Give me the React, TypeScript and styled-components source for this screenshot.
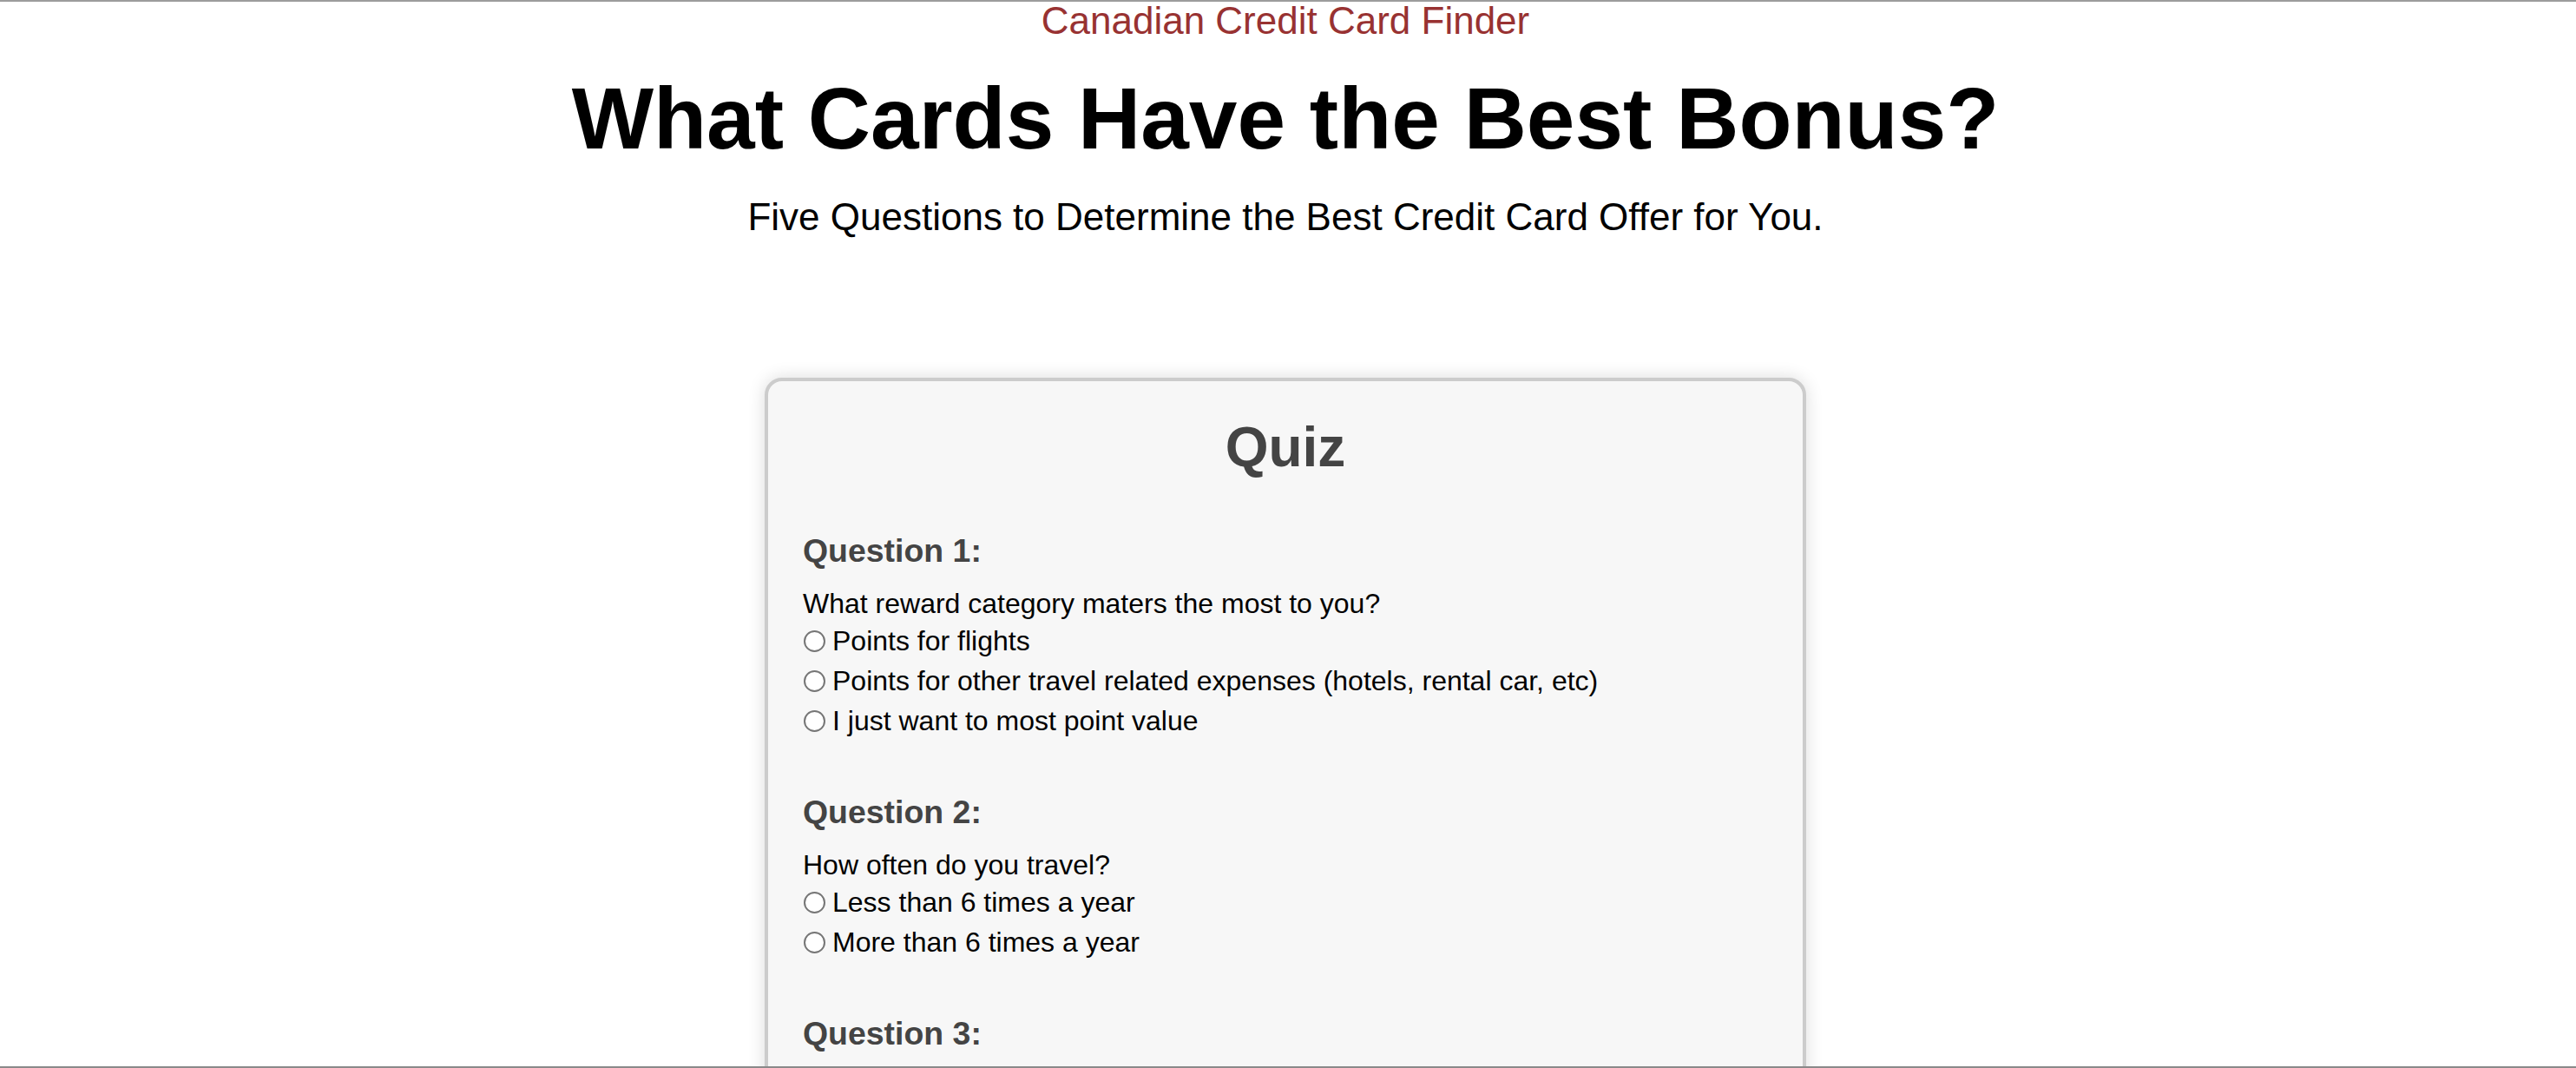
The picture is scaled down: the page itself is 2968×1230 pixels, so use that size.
import React from "react";
import styled, { createGlobalStyle } from "styled-components";

const GlobalStyle = createGlobalStyle`
  html, body {
    margin: 0;
    padding: 0;
    background: #ffffff;
  }
  body {
    font-family: "Liberation Sans", Arial, Helvetica, sans-serif;
    color: #000;
  }
`;

const Page = styled.div`
  box-sizing: border-box;
  height: 100vh;
  overflow: hidden;
  padding-right: 6px;
  border-top: 2px solid #9c9c9c;
  border-bottom: 2px solid #8a8a8a;
  font-family: "Liberation Sans", Arial, Helvetica, sans-serif;
`;

const Header = styled.header`
  display: flex;
  flex-direction: column;
  align-items: center;
  text-align: center;
`;

const Brand = styled.div`
  font-size: 44px;
  line-height: 44px;
  color: #983232;
`;

const Title = styled.h1`
  margin: 35px 0 0;
  font-size: 100px;
  line-height: 110px;
  font-weight: 700;
  color: #000;
`;

const Subtitle = styled.p`
  margin: 34px 0 0;
  font-size: 44px;
  line-height: 50px;
  color: #000;
`;

const Card = styled.section`
  box-sizing: border-box;
  width: 1200px;
  margin: 160px auto 0;
  padding: 40px;
  background: #f7f7f7;
  border: 4px solid #cccccc;
  border-radius: 20px;
  box-shadow: 0 0 20px rgba(0, 0, 0, 0.14);
`;

const CardTitle = styled.h2`
  margin: 0 0 3px;
  font-size: 64px;
  line-height: 72px;
  font-weight: 700;
  color: #444444;
  text-align: center;
`;

const Question = styled.fieldset`
  margin: 61px 0 0;
  padding: 0;
  border: none;
  display: flex;
  flex-direction: column;
  & + & {
    margin-top: 60px;
  }
`;

const QuestionHeading = styled.h3`
  margin: 0;
  font-size: 37.44px;
  line-height: 44px;
  font-weight: 700;
  color: #444444;
`;

const QuestionText = styled.p`
  margin: 19px 0 0;
  font-size: 32px;
  line-height: 40px;
  color: #000;
`;

const Option = styled.label`
  display: flex;
  align-items: center;
  gap: 8px;
  height: 46px;
  font-size: 32px;
  line-height: 46px;
  color: #000;
  cursor: pointer;
`;

const Radio = styled.input.attrs({ type: "radio" })`
  appearance: none;
  -webkit-appearance: none;
  box-sizing: border-box;
  flex: none;
  width: 25px;
  height: 25px;
  margin: 0 0 0 1px;
  border: 2px solid #767676;
  border-radius: 50%;
  background: #ffffff;
  &:checked {
    border: 7px solid #1a73e8;
  }
`;

type Q = { id: string; title: string; text: string; options: string[] };

const questions: Q[] = [
  {
    id: "q1",
    title: "Question 1:",
    text: "What reward category maters the most to you?",
    options: [
      "Points for flights",
      "Points for other travel related expenses (hotels, rental car, etc)",
      "I just want to most point value",
    ],
  },
  {
    id: "q2",
    title: "Question 2:",
    text: "How often do you travel?",
    options: ["Less than 6 times a year", "More than 6 times a year"],
  },
  {
    id: "q3",
    title: "Question 3:",
    text: "How much do you spend on your credit card each month?",
    options: ["Less than $1,000", "Between $1,000 and $3,000", "More than $3,000"],
  },
];

export default function App() {
  return (
    <>
      <GlobalStyle />
      <Page>
        <Header>
          <Brand>Canadian Credit Card Finder</Brand>
          <Title>What Cards Have the Best Bonus?</Title>
          <Subtitle>Five Questions to Determine the Best Credit Card Offer for You.</Subtitle>
        </Header>
        <Card>
          <CardTitle>Quiz</CardTitle>
          {questions.map((q) => (
            <Question key={q.id}>
              <QuestionHeading>{q.title}</QuestionHeading>
              <QuestionText>{q.text}</QuestionText>
              {q.options.map((o) => (
                <Option key={o}>
                  <Radio name={q.id} value={o} />
                  {o}
                </Option>
              ))}
            </Question>
          ))}
        </Card>
      </Page>
    </>
  );
}
